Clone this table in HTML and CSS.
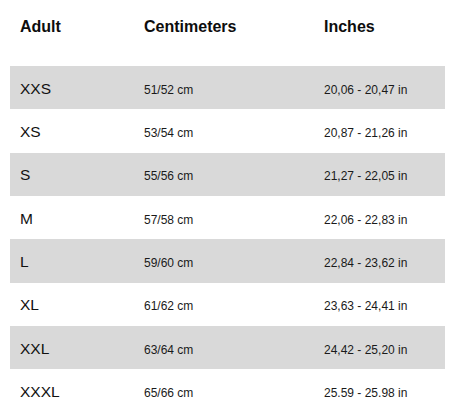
FILE: index.html
```html
<!DOCTYPE html>
<html>
<head>
<meta charset="utf-8">
<link rel="stylesheet" href="styles.css">
</head>
<body>
<div class="chart">
  <div class="row head">
    <div class="c1">Adult</div>
    <div class="c2">Centimeters</div>
    <div class="c3">Inches</div>
  </div>
  <div class="row shade"><div class="c1">XXS</div><div class="c2">51/52 cm</div><div class="c3">20,06 - 20,47 in</div></div>
  <div class="row"><div class="c1">XS</div><div class="c2">53/54 cm</div><div class="c3">20,87 - 21,26 in</div></div>
  <div class="row shade"><div class="c1">S</div><div class="c2">55/56 cm</div><div class="c3">21,27 - 22,05 in</div></div>
  <div class="row"><div class="c1">M</div><div class="c2">57/58 cm</div><div class="c3">22,06 - 22,83 in</div></div>
  <div class="row shade"><div class="c1">L</div><div class="c2">59/60 cm</div><div class="c3">22,84 - 23,62 in</div></div>
  <div class="row"><div class="c1">XL</div><div class="c2">61/62 cm</div><div class="c3">23,63 - 24,41 in</div></div>
  <div class="row shade"><div class="c1">XXL</div><div class="c2">63/64 cm</div><div class="c3">24,42 - 25,20 in</div></div>
  <div class="row"><div class="c1">XXXL</div><div class="c2">65/66 cm</div><div class="c3">25.59 - 25.98 in</div></div>
</div>
</body>
</html>
```
FILE: styles.css
```css
html, body {
  margin: 0;
  padding: 0;
  background: #ffffff;
}
body {
  font-family: "Liberation Sans", Arial, sans-serif;
  color: #111111;
}
.chart {
  width: 435px;
  margin-left: 10px;
}
.row {
  display: grid;
  grid-template-columns: 124px 180px 1fr;
  align-items: baseline;
  box-sizing: border-box;
  height: 43.33px;
  padding: 14.8px 0 0 10px;
  line-height: 16px;
}
.row .c1 {
  font-size: 15.5px;
}
.row .c2, .row .c3 {
  font-size: 12px;
  color: #1a1a1a;
}
.row.head {
  height: 66px;
  padding-top: 18.8px;
}
.row.head .c1, .row.head .c2, .row.head .c3 {
  font-size: 16px;
  font-weight: bold;
  color: #0d0d0d;
}
.shade {
  background: #d9d9d9;
}
```
